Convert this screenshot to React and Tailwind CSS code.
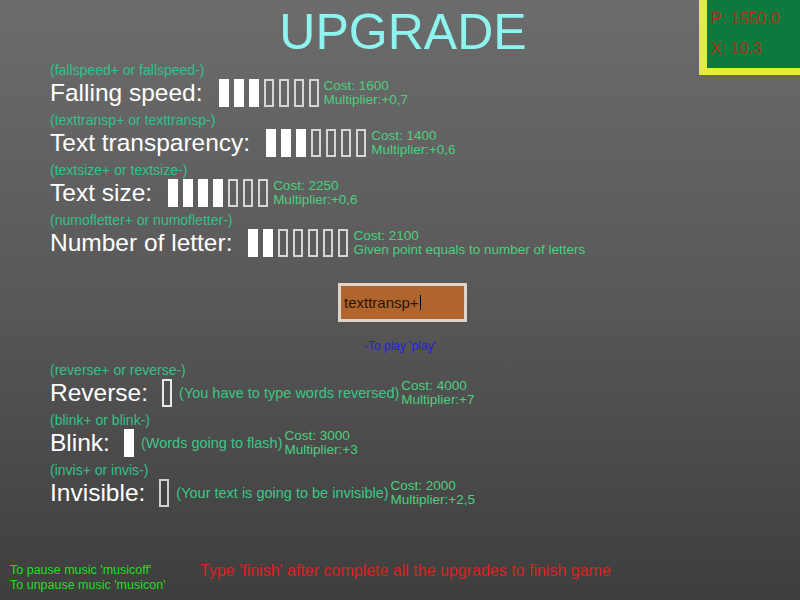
import React from 'react';

const font = { fontFamily: '"Liberation Sans", Arial, sans-serif' };

const Bars = ({ filled, total }) => (
    <div className="flex gap-[5px]">
        {Array.from({ length: total }).map((_, i) =>
            i < filled ? (
                <div key={i} className="w-[10px] h-[28px] bg-white" />
            ) : (
                <div key={i} className="w-[10px] h-[28px] border-2 border-[#d6d6d6]" />
            )
        )}
    </div>
);

const Cost = ({ cost, second }) => (
    <div className="flex flex-col text-[13.5px] leading-[14px] text-[#4ccf7e]">
        <span>Cost: {cost}</span>
        <span>{second}</span>
    </div>
);

const Upgrade = ({ hint, label, children }) => (
    <div className="h-[50px] pl-[50px]">
        <div className="h-[16px] text-[14px] leading-[16px] text-[#34c08a]">{hint}</div>
        <div className="h-[30px] flex items-center">
            <span className="text-[24.5px] leading-none text-white whitespace-nowrap">{label}</span>
            {children}
        </div>
    </div>
);

const upgrades = [
    { hint: '(fallspeed+ or fallspeed-)', label: 'Falling speed:', filled: 3, cost: 1600, second: 'Multiplier:+0,7' },
    { hint: '(texttransp+ or texttransp-)', label: 'Text transparency:', filled: 3, cost: 1400, second: 'Multiplier:+0,6' },
    { hint: '(textsize+ or textsize-)', label: 'Text size:', filled: 4, cost: 2250, second: 'Multiplier:+0,6' },
    { hint: '(numofletter+ or numofletter-)', label: 'Number of letter:', filled: 2, cost: 2100, second: 'Given point equals to number of letters' },
];

const extras = [
    { hint: '(reverse+ or reverse-)', label: 'Reverse:', on: false, desc: '(You have to type words reversed)', cost: 4000, second: 'Multiplier:+7', inner: 'bg-transparent border-[#e8e8e8]' },
    { hint: '(blink+ or blink-)', label: 'Blink:', on: true, desc: '(Words going to flash)', cost: 3000, second: 'Multiplier:+3' },
    { hint: '(invis+ or invis-)', label: 'Invisible:', on: false, desc: '(Your text is going to be invisible)', cost: 2000, second: 'Multiplier:+2,5', inner: 'bg-[#3a3a3a]/40 border-[#cfcfcf]' },
];

export default function App() {
    return (
        <div className="relative w-full h-[600px] overflow-hidden bg-linear-to-b from-[#6c6c6c] via-[#585858] to-[#3e3e3e]" style={font}>
            <div className="absolute right-0 top-0 w-[101px] h-[75px] bg-[#0c7a3c] border-l-[8px] border-b-[7px] border-[#e2ee3a] pl-[4px] pt-[4px] text-[16px] leading-[30px] text-[#b0301c]">
                <div>P: 1550.0</div>
                <div>X: 10.3</div>
            </div>

            <div className="h-[62px] pt-[7px] pl-[6px] text-center text-[50px] leading-none text-[#8ef4f0]">UPGRADE</div>

            {upgrades.map((u) => (
                <Upgrade key={u.label} hint={u.hint} label={u.label}>
                    <div className="ml-[16px] mr-[5px]">
                        <Bars filled={u.filled} total={7} />
                    </div>
                    <Cost cost={u.cost} second={u.second} />
                </Upgrade>
            ))}

            <div className="mt-[21px] ml-[338px] w-[129px] h-[39px] border-[3px] border-[#ddd5cc] bg-[#b0652c] flex items-center pl-[3px]">
                <span className="text-[15px] leading-none text-[#2a1408]">texttransp+</span>
                <span className="ml-[1px] w-[1px] h-[15px] bg-black" />
            </div>

            <div className="mt-[17px] text-center text-[12px] leading-[14px] text-[#2222d4]">-To play 'play'</div>

            <div className="mt-[9px]">
                {extras.map((e) => (
                    <Upgrade key={e.label} hint={e.hint} label={e.label}>
                        <div className="ml-[14px] mr-[7px]">
                            {e.on ? (
                                <div className="w-[10px] h-[28px] bg-white" />
                            ) : (
                                <div className={`w-[10px] h-[28px] border-[2.5px] ${e.inner}`} />
                            )}
                        </div>
                        <span className="text-[14.5px] leading-none text-[#3ac785] whitespace-nowrap mr-[2px]">{e.desc}</span>
                        <Cost cost={e.cost} second={e.second} />
                    </Upgrade>
                ))}
            </div>

            <div className="mt-[51px] flex items-start pl-[10px]">
                <div className="w-[190px] text-[12.5px] leading-[15px] text-[#22dd22] whitespace-nowrap">
                    <div>To pause music 'musicoff'</div>
                    <div>To unpause music 'musicon'</div>
                </div>
                <div className="text-[16px] leading-[16px] text-[#dc2020] whitespace-nowrap">
                    Type 'finish' after complete all the upgrades to finish game
                </div>
            </div>
        </div>
    );
}
